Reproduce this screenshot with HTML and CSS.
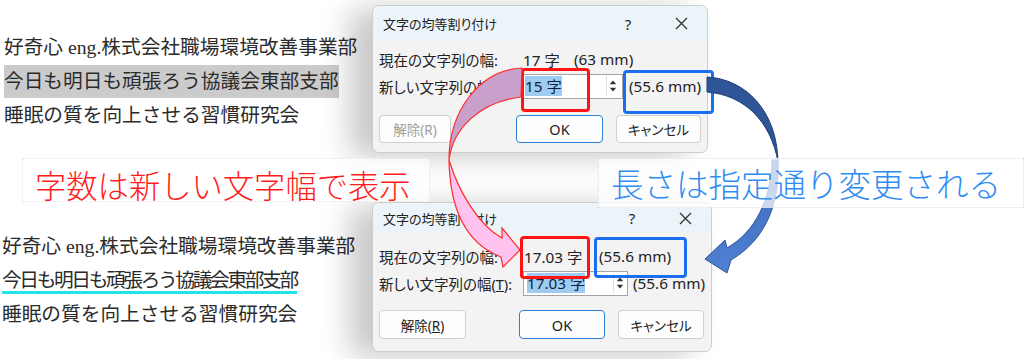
FILE: index.html
```html
<!DOCTYPE html>
<html lang="ja">

<head>
    <meta charset="UTF-8">
    <link rel="stylesheet" href="styles.css">
    <title>文字の均等割り付け</title>
</head>

<body>
    <div class="page">
        <section class="row row-top">
            <div class="doc">
                <p class="line">好奇心 eng.株式会社職場環境改善事業部</p>
                <p class="line"><span class="hl">今日も明日も頑張ろう協議会東部支部</span></p>
                <p class="line">睡眠の質を向上させる習慣研究会</p>
            </div>
            <div class="dialog dialog-top">
                <div class="title">
                    <span class="name">文字の均等割り付け</span>
                    <span class="help">?</span>
                    <svg class="close" width="13" height="13" viewBox="0 0 13 13"><path d="M1 1L12 12M12 1L1 12" stroke="#333" stroke-width="1.3" /></svg>
                </div>
                <div class="form">
                    <div class="field">
                        <span class="key">現在の文字列の幅:</span>
                        <span class="count">17 字</span>
                        <span>(63 mm)</span>
                    </div>
                    <div class="field">
                        <span class="key">新しい文字列の幅(<u>T</u>):</span>
                        <span class="input mark-red">
                            <span class="sel">15 字</span>
                            <svg class="spin" width="13" height="20" viewBox="0 0 13 20"><path d="M3 8L6.5 4L10 8Z M3 12L6.5 16L10 12Z" fill="#333" /></svg>
                        </span>
                        <span class="mm mark-blue">(55.6 mm)</span>
                    </div>
                    <div class="buttons">
                        <button class="btn btn-clear" disabled>解除(R)</button>
                        <button class="btn btn-ok">OK</button>
                        <button class="btn btn-cancel">キャンセル</button>
                    </div>
                </div>
            </div>
        </section>

        <section class="band">
            <div class="label label-red">字数は新しい文字幅で表示</div>
            <div class="label label-blue">長さは指定通り変更される</div>
        </section>

        <section class="row row-bottom">
            <div class="doc">
                <p class="line">好奇心 eng.株式会社職場環境改善事業部</p>
                <p class="line"><span class="ul">今日も明日も頑張ろう協議会東部支部</span></p>
                <p class="line">睡眠の質を向上させる習慣研究会</p>
            </div>
            <div class="dialog dialog-bottom">
                <div class="title">
                    <span class="name">文字の均等割り付け</span>
                    <span class="help">?</span>
                    <svg class="close" width="13" height="13" viewBox="0 0 13 13"><path d="M1 1L12 12M12 1L1 12" stroke="#333" stroke-width="1.3" /></svg>
                </div>
                <div class="form">
                    <div class="field">
                        <span class="key">現在の文字列の幅:</span>
                        <span class="count mark-red">17.03 字</span>
                        <span class="mark-blue">(55.6 mm)</span>
                    </div>
                    <div class="field">
                        <span class="key">新しい文字列の幅(<u>T</u>):</span>
                        <span class="input">
                            <span class="sel">17.03 字</span>
                            <svg class="spin" width="13" height="20" viewBox="0 0 13 20"><path d="M3 8L6.5 4L10 8Z M3 12L6.5 16L10 12Z" fill="#333" /></svg>
                        </span>
                        <span class="mm">(55.6 mm)</span>
                    </div>
                    <div class="buttons">
                        <button class="btn btn-clear">解除(<u>R</u>)</button>
                        <button class="btn btn-ok">OK</button>
                        <button class="btn btn-cancel">キャンセル</button>
                    </div>
                </div>
            </div>
        </section>

        <svg class="arrows" width="1024" height="359" viewBox="0 0 1024 359">
            <defs>
                <linearGradient id="blueLow" x1="0" y1="0" x2="0" y2="1">
                    <stop offset="0" stop-color="#3f6cbf" />
                    <stop offset="1" stop-color="#4f80d2" />
                </linearGradient>
            </defs>
            <!-- pink arrow: new width -> current width -->
            <path d="M522 68C480 70 449 110 449 160C453 128 480 102 521 97Z" fill="#c99fcb" stroke="#ff2b2b" stroke-width="1.2" />
            <path d="M449 160C458 190 478 225 502 238L502 228L520 250L503 267L501 257C470 245 450 215 449 160Z" fill="#ffc3f0" stroke="#ff2b2b" stroke-width="1.2" />
            <!-- blue arrow: length kept -->
            <path d="M707 77C745 79 777 110 778 162C771 122 745 95 707 92Z" fill="#2f5597" stroke="#203f78" stroke-width="1" />
            <path d="M778 160C780 205 765 240 731 260L727 273L705 259L725 240L727 248C755 232 771 200 772 160Z" fill="url(#blueLow)" stroke="#2f5597" stroke-width="1" />
        </svg>
    </div>
</body>

</html>
```

FILE: styles.css
```css
* {
    margin: 0;
    padding: 0;
    box-sizing: border-box;
}

body {
    width: 1024px;
    height: 359px;
    overflow: hidden;
    background-color: #fff;
    font-family: "Noto Sans", "Noto Sans CJK JP", sans-serif;
}

.page {
    position: relative;
    width: 1024px;
    height: 359px;
}

.row {
    display: flex;
    height: 153px;
}

.row-bottom {
    height: 157px;
}

/* document text on the left */
.doc {
    width: 372px;
    padding: 30px 0 0 4px;
    font-family: "Liberation Serif", "Noto Sans CJK JP", serif;
    font-size: 19.7px;
    color: #2b2b2b;
}

.row-bottom .doc {
    padding-top: 27px;
    padding-left: 2px;
}

.line {
    height: 34px;
    line-height: 34px;
    white-space: nowrap;
}

.hl {
    display: inline-block;
    height: 33px;
    line-height: 33px;
    background-color: #cbcbcb;
}

.ul {
    letter-spacing: -2.35px;
    border-bottom: 3px solid #22e3ea;
}

/* dialogs */
.dialog {
    display: flex;
    flex-direction: column;
    background-color: #f3f3f3;
    border: 1px solid #cdcdcd;
    border-radius: 7px;
    box-shadow: -22px 4px 30px rgba(0, 0, 0, 0.22);
    color: #222;
    font-size: 15.3px;
    font-feature-settings: "palt";
}

.dialog-top {
    width: 336px;
    height: 148px;
    margin-top: 5px;
}

.dialog-bottom {
    width: 340px;
    height: 150px;
}

.title {
    display: flex;
    align-items: center;
    height: 35px;
    padding-left: 10px;
    background-color: #ebf4f8;
    border-radius: 7px 7px 0 0;
    font-size: 13px;
}

.dialog-bottom .title {
    height: 30px;
}

.title .name {
    flex: 1;
}

.title .help {
    width: 20px;
    margin-right: 37px;
    text-align: center;
    font-size: 15px;
    font-family: "Noto Sans", sans-serif;
}

.title .close {
    margin-right: 19px;
}

.form {
    padding: 5px 0 0 6px;
}

.dialog-bottom .form {
    padding-top: 10px;
}

.field {
    display: flex;
    align-items: center;
    height: 26px;
    margin-bottom: 1px;
    white-space: nowrap;
}

.key {
    width: 144px;
    font-size: 14.5px;
}

.count {
    width: 51px;
}

.dialog-bottom .count {
    width: 75px;
    margin-left: 1px;
}

.input {
    display: flex;
    align-items: center;
    justify-content: space-between;
    width: 102px;
    height: 25px;
    margin-left: -2px;
    padding: 0 3px 0 3px;
    background-color: #fff;
    border: 1px solid #a5a5a5;
}

.dialog-bottom .input {
    width: 105px;
    margin-left: 0;
    padding-right: 1px;
}

.sel {
    background-color: #9fcbf0;
    color: #0f1f3a;
    line-height: 20px;
}

.spin {
    border-left: 1px solid #e0e0e0;
}

.mm {
    margin-left: 6px;
}

.dialog-bottom .mm {
    margin-left: 5px;
}

/* annotation boxes */
.mark-red,
.mark-blue {
    position: relative;
}

.mark-red::after,
.mark-blue::after {
    content: "";
    position: absolute;
    border: 3px solid #ff1414;
    border-radius: 4px;
}

.mark-blue::after {
    border-color: #1a6ff0;
}

.dialog-top .mark-red::after {
    left: -1px;
    top: -7px;
    width: 63px;
    height: 38px;
}

.dialog-top .mark-blue::after {
    left: -6px;
    top: -6px;
    width: 85px;
    height: 38px;
}

.dialog-bottom .mark-red::after {
    left: -4px;
    top: -9px;
    width: 64px;
    height: 37px;
}

.dialog-bottom .mark-blue::after {
    left: -5px;
    top: -9px;
    width: 87px;
    height: 35px;
}

.buttons {
    display: flex;
    margin-top: 16px;
}

.dialog-bottom .buttons {
    margin-top: 14px;
}

.btn {
    height: 28px;
    background-color: #fdfdfd;
    border: 1px solid #cfcfcf;
    border-radius: 4px;
    font-family: inherit;
    font-size: 13.5px;
    font-feature-settings: "palt";
    color: #222;
}

.dialog-bottom .btn {
    height: 29px;
}

.btn-clear {
    width: 72px;
    margin-right: 65px;
}

.btn-clear:disabled {
    color: #a0a0a0;
}

.dialog-bottom .btn-clear {
    width: 87px;
    margin-right: 53px;
}

.btn-ok {
    width: 87px;
    margin-right: 13px;
    border: 1.5px solid #2b80d6;
    font-size: 14.5px;
}

.btn-cancel {
    width: 85px;
}

.dialog-bottom .btn-ok,
.dialog-bottom .btn-cancel {
    width: 86px;
}

/* labels in the middle */
.band {
    display: flex;
    height: 49px;
    position: relative;
    z-index: 3;
}

.label {
    height: 50px;
    margin-top: 5px;
    padding-left: 12px;
    line-height: 48px;
    font-family: "Noto Sans CJK JP", sans-serif;
    font-weight: 300;
    white-space: nowrap;
    background-color: rgba(255, 255, 255, 0.72);
    border: 1px dotted #dcdce6;
}

.label-red {
    width: 408px;
    height: 44px;
    margin-left: 22px;
    line-height: 44px;
    padding-top: 4px;
    font-size: 31.3px;
    color: #ff1c1c;
    border-color: #f0dde6;
}

.label-blue {
    width: 426px;
    margin-left: 168px;
    font-size: 32.5px;
    color: #2f8cf2;
}

.arrows {
    position: absolute;
    left: 0;
    top: 0;
    z-index: 2;
    pointer-events: none;
}
```
